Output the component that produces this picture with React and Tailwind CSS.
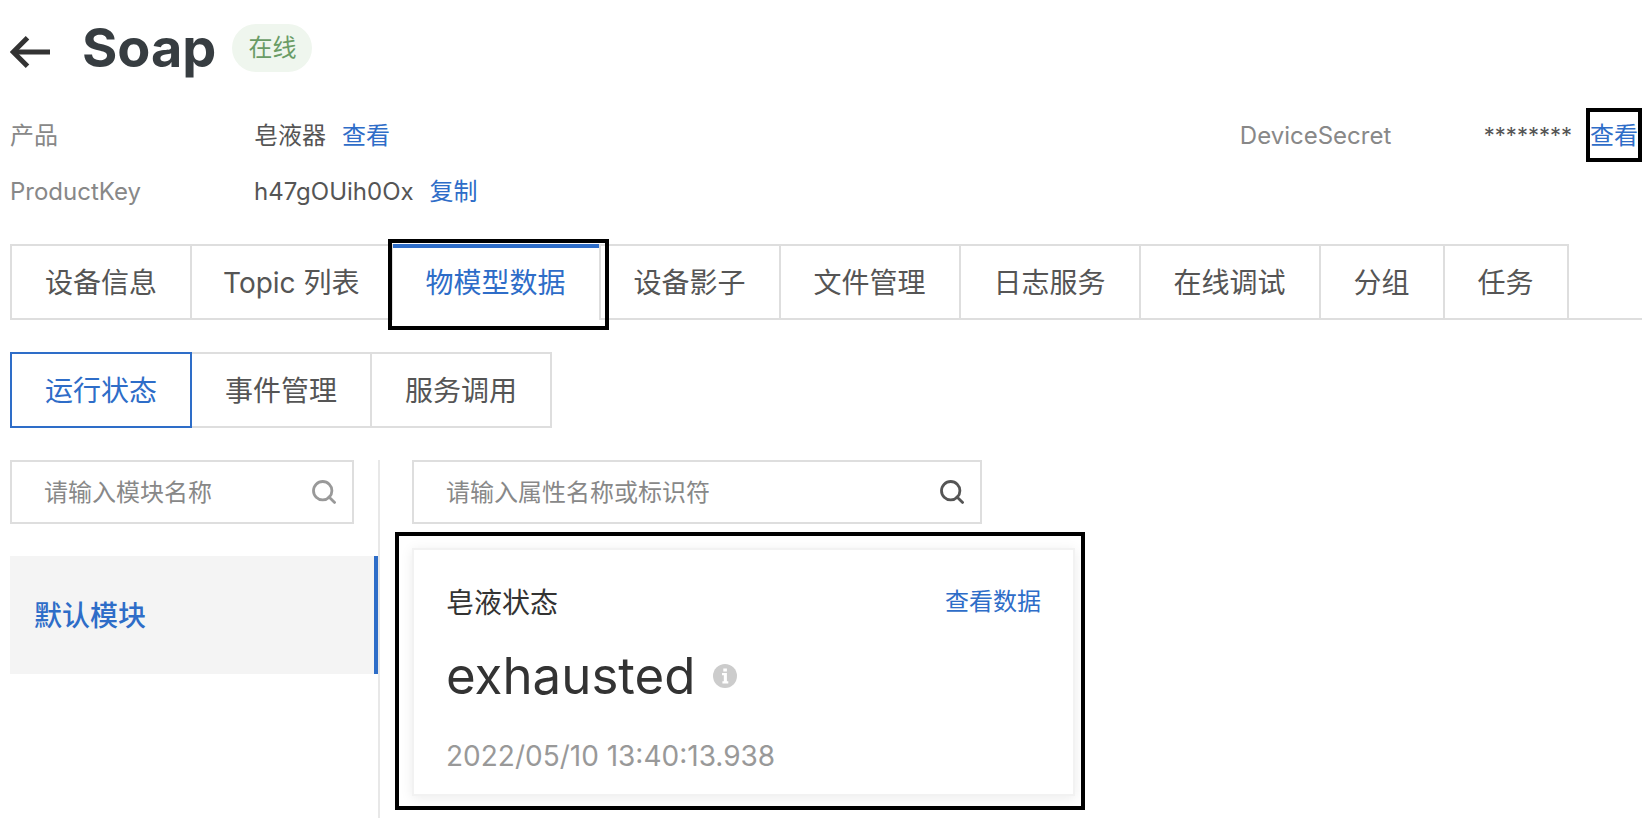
const tabs = [
  '设备信息',
  'Topic 列表',
  '物模型数据',
  '设备影子',
  '文件管理',
  '日志服务',
  '在线调试',
  '分组',
  '任务',
];
const activeTab = '物模型数据';

const subTabs = ['运行状态', '事件管理', '服务调用'];
const activeSubTab = '运行状态';

function BackArrow() {
  return (
    <svg width="40" height="32" viewBox="0 0 40 32" fill="none" stroke="#333333" strokeWidth="5" aria-hidden="true">
      <path d="M40 16H3.5" />
      <path d="M17.5 1.8 3.2 16l14.3 14.2" strokeLinejoin="miter" />
    </svg>
  );
}

function SearchIcon() {
  return (
    <svg width="24" height="24" viewBox="0 0 24 24" fill="none" stroke="currentColor" strokeWidth="2.8" aria-hidden="true">
      <circle cx="10.7" cy="10.7" r="9.2" />
      <path d="m17 17 5.6 5.4" strokeLinecap="round" />
    </svg>
  );
}

function InfoIcon() {
  return (
    <svg width="24" height="24" viewBox="0 0 24 24" aria-hidden="true">
      <circle cx="12" cy="12" r="12" fill="#cccccc" />
      <path d="M10.3 4.4h3.6v3h-3.6zM9 9h4.9v8.2h1.4v2.2H9.4v-2.2h1.4v-6H9z" fill="#ffffff" />
    </svg>
  );
}

function SearchBox({ label, placeholder, className, iconClass }) {
  return (
    <form
      role="search"
      onSubmit={(e) => e.preventDefault()}
      className={`flex h-16 items-center border-2 border-[#dedede] pr-4 pl-8 ${className}`}
    >
      <input
        type="text"
        aria-label={label}
        placeholder={placeholder}
        className="h-14 min-w-0 flex-1 bg-transparent text-2xl leading-10 text-[#555555] outline-none placeholder:text-[#888888]"
      />
      <button type="submit" aria-label="搜索" className={iconClass}>
        <SearchIcon />
      </button>
    </form>
  );
}

export default function App() {
  return (
    <main className="flex min-h-screen flex-col overflow-x-hidden bg-white pt-6 pl-[10px] font-['Inter','Noto_Sans_CJK_SC',sans-serif] text-[#555555]">
      <header className="flex h-12 items-center">
        <button type="button" aria-label="返回" className="mt-2">
          <BackArrow />
        </button>
        <h1 className="ml-8 text-[54px] leading-[48px] font-bold text-[#373d41]">Soap</h1>
        <span className="ml-4 flex h-12 items-center rounded-full bg-[#eff6ee] px-4 text-2xl text-[#6a9c66]">在线</span>
      </header>

      <div className="mt-9 flex items-start justify-between text-2xl">
        <dl className="grid grid-cols-[244px_auto]">
          <dt className="flex h-14 items-center text-[#888888]">产品</dt>
          <dd className="flex h-14 items-center gap-4">
            皂液器
            <a href="#product" className="text-[#2e6dc8]">查看</a>
          </dd>
          <dt className="flex h-14 items-center text-[#888888]">ProductKey</dt>
          <dd className="flex h-14 items-center gap-4">
            h47gOUih0Ox
            <button type="button" className="text-[#2e6dc8]">复制</button>
          </dd>
        </dl>
        <dl className="grid grid-cols-[244px_auto]">
          <dt className="flex h-14 items-center text-[#888888]">DeviceSecret</dt>
          <dd className="flex h-14 items-center gap-[14px]">
            <span className="text-[22px]">********</span>
            <button type="button" className="h-[54px] self-start border-4 border-black pt-0.5 text-[#2e6dc8]">查看</button>
          </dd>
        </dl>
      </div>

      <nav className="mt-6 flex text-[28px] leading-8">
        {tabs.map((tab, i) =>
          tab === activeTab ? (
            <button
              key={tab}
              type="button"
              aria-current="page"
              className="relative h-[76px] shrink-0 border-r-2 border-[#dedede] px-[33px] pt-0.5 text-[#2e6dc8] shadow-[inset_0_4px_0_#2e6dc8]"
            >
              {tab}
              <span className="pointer-events-none absolute -top-[5px] -right-[10px] -bottom-[10px] -left-[5px] border-4 border-black" />
            </button>
          ) : (
            <button
              key={tab}
              type="button"
              className={`h-[76px] shrink-0 border-y-2 border-r-2 border-[#dedede] pt-0.5 ${i === 0 ? 'border-l-2' : ''} ${i === 1 ? 'px-[31px]' : 'px-[33px]'}`}
            >
              {tab}
            </button>
          ),
        )}
        <span className="flex-1 border-b-2 border-[#dedede]" />
      </nav>

      <div className="mt-8 flex text-[28px] leading-8">
        {subTabs.map((tab) => (
          <button
            key={tab}
            type="button"
            className={
              tab === activeSubTab
                ? 'h-[76px] border-2 border-[#2e6dc8] px-[33px] pt-0.5 text-[#2e6dc8]'
                : 'h-[76px] border-y-2 border-r-2 border-[#dedede] px-[33px] pt-0.5'
            }
          >
            {tab}
          </button>
        ))}
      </div>

      <div className="mt-8 flex flex-1">
        <aside className="w-[370px] shrink-0 border-r-2 border-[#e8e8e8]">
          <SearchBox
            label="模块名称"
            placeholder="请输入模块名称"
            className="mr-6"
            iconClass="text-[#999999]"
          />
          <button
            type="button"
            className="mt-8 flex h-[118px] w-full items-center border-r-4 border-[#2e6dc8] bg-[#f4f4f4] pt-0.5 pl-6 text-[28px] font-medium text-[#2e6dc8]"
          >
            默认模块
          </button>
        </aside>

        <section className="ml-8 w-[663px]">
          <SearchBox
            label="属性名称或标识符"
            placeholder="请输入属性名称或标识符"
            className="w-[570px]"
            iconClass="text-[#555555]"
          />
          <div className="relative mt-6">
            <article className="h-[248px] border-2 border-[#f2f2f2] px-8 pt-9 shadow-[0_2px_12px_rgba(0,0,0,0.08)]">
              <div className="flex h-8 items-center justify-between">
                <h2 className="pt-0.5 text-[28px] leading-8 text-[#333333]">皂液状态</h2>
                <a href="#data" className="text-2xl text-[#2e6dc8]">查看数据</a>
              </div>
              <div className="mt-[26px] flex h-16 items-center">
                <p className="text-[51px] leading-[64px] text-[#333333]">exhausted</p>
                <button type="button" aria-label="说明" className="ml-[18px]">
                  <InfoIcon />
                </button>
              </div>
              <time className="mt-[26px] block text-[28px] leading-[44px] text-[#999999]">2022/05/10 13:40:13.938</time>
            </article>
            <div className="pointer-events-none absolute -top-4 -right-[10px] -bottom-[14px] -left-[17px] border-4 border-black" />
          </div>
        </section>
      </div>
    </main>
  );
}
